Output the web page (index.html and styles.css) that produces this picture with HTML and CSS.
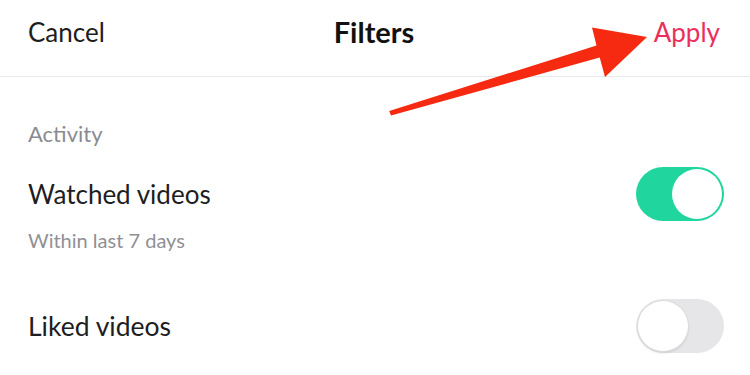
FILE: index.html
```html
<!DOCTYPE html>
<html>
<head>
<meta charset="utf-8">
<link rel="stylesheet" href="styles.css">
</head>
<body>
<div class="screen">
  <header class="topbar">
    <span class="cancel">Cancel</span>
    <span class="title">Filters</span>
    <span class="apply">Apply</span>
  </header>
  <main class="content">
    <div class="section-label">Activity</div>
    <div class="row row-first">
      <span class="row-title">Watched videos</span>
      <span class="toggle on"><span class="knob"></span></span>
    </div>
    <div class="sub">Within last 7 days</div>
    <div class="row row-second">
      <span class="row-title">Liked videos</span>
      <span class="toggle off"><span class="knob"></span></span>
    </div>
  </main>
  <svg class="arrow" width="750" height="375" viewBox="0 0 750 375">
    <polygon fill="#f62a10" points="389.2,111 596.5,45.5 592,27.5 647,37 605,77 599.7,57.5 391,115.5"/>
  </svg>
</div>
</body>
</html>
```

FILE: styles.css
```css
html, body {
  margin: 0;
  padding: 0;
  background: #fff;
}
.screen {
  position: relative;
  width: 750px;
  height: 375px;
  overflow: hidden;
  font-family: Lato, "Open Sans", sans-serif;
  color: #161823;
}
.topbar {
  height: 77px;
  box-sizing: border-box;
  border-bottom: 1px solid #e9e9ea;
  display: flex;
  justify-content: space-between;
  align-items: flex-start;
  padding: 16px 30px 0 28px;
}
.cancel {
  font-size: 26px;
  line-height: 32px;
  color: #1d1d22;
  width: 140px;
}
.title {
  font-size: 29px;
  line-height: 32px;
  font-weight: 700;
  color: #111;
}
.apply {
  font-size: 26px;
  line-height: 32px;
  color: #ea2f5c;
  width: 140px;
  text-align: right;
}
.content {
  padding: 0 26px 0 28px;
}
.section-label {
  margin-top: 44px;
  font-size: 22px;
  line-height: 26px;
  color: #8a8b91;
}
.row {
  display: flex;
  justify-content: space-between;
  align-items: center;
  height: 54px;
}
.row-first {
  margin-top: 20px;
}
.row-second {
  margin-top: 47px;
}
.row-title {
  font-size: 26px;
  line-height: 32px;
  color: #1d1d22;
}
.row-second .row-title {
  font-size: 26.5px;
}
.sub {
  margin-top: 7px;
  font-size: 20px;
  line-height: 24px;
  color: #8f9095;
}
.toggle {
  width: 88px;
  height: 54px;
  border-radius: 27px;
  display: flex;
  align-items: center;
  box-sizing: border-box;
}
.toggle.on {
  background: #20d59e;
  justify-content: flex-end;
  padding: 2px;
}
.toggle.off {
  background: #e6e6e8;
  justify-content: flex-start;
  padding: 2px;
}
.knob {
  width: 50px;
  height: 50px;
  border-radius: 50%;
  background: #fff;
}
.toggle.off .knob {
  box-shadow: 0 0 0 1px #dcdcde, 0 2px 3px rgba(0,0,0,0.12);
}
.arrow {
  position: absolute;
  left: 0;
  top: 0;
  pointer-events: none;
}
```
